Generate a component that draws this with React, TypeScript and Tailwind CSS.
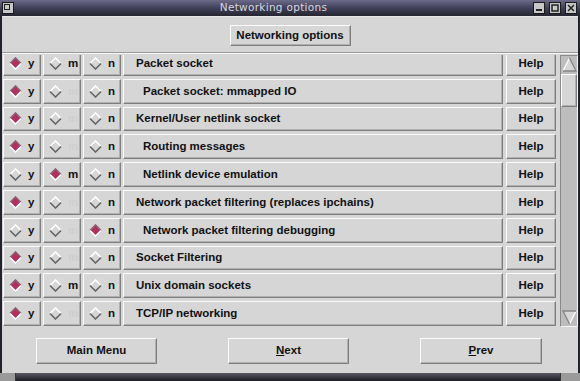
import React from 'react'

type Row = { label: string; indent?: boolean; sel: 'y' | 'm' | 'n'; mOk: boolean }

const rows: Row[] = [
  { label: 'Packet socket', sel: 'y', mOk: true },
  { label: 'Packet socket: mmapped IO', indent: true, sel: 'y', mOk: false },
  { label: 'Kernel/User netlink socket', sel: 'y', mOk: false },
  { label: 'Routing messages', indent: true, sel: 'y', mOk: false },
  { label: 'Netlink device emulation', indent: true, sel: 'm', mOk: true },
  { label: 'Network packet filtering (replaces ipchains)', sel: 'y', mOk: false },
  { label: 'Network packet filtering debugging', indent: true, sel: 'n', mOk: false },
  { label: 'Socket Filtering', sel: 'y', mOk: false },
  { label: 'Unix domain sockets', sel: 'y', mOk: true },
  { label: 'TCP/IP networking', sel: 'y', mOk: false },
]

const raised =
  'border border-t-[#fbfbfb] border-l-[#fbfbfb] border-b-[#7e7e7e] border-r-[#7e7e7e] shadow-[inset_-1px_-1px_0_#b0b0b0]'

function Diamond({ on }: { on: boolean }) {
  return (
    <svg width="13" height="13" viewBox="0 0 13 13" className="shrink-0">
      <polygon points="6.5,1 12,6.5 6.5,12 1,6.5" fill={on ? '#b03060' : '#d6d6d6'} />
      <polyline points="1,6.5 6.5,1 12,6.5" fill="none" stroke={on ? '#8a6070' : '#ffffff'} strokeWidth="1.6" />
      <polyline points="1,6.5 6.5,12 12,6.5" fill="none" stroke={on ? '#ffffff' : '#666666'} strokeWidth="1.6" />
    </svg>
  )
}

function Choice({ on, letter, faint }: { on: boolean; letter: string; faint?: boolean }) {
  return (
    <div className={`w-[38px] h-full flex items-center pl-[5px] ${raised}`}>
      <Diamond on={on} />
      <span className={`ml-[6px] ${faint ? 'text-[#cfcfcf]' : 'text-[#111]'}`}>{letter}</span>
    </div>
  )
}

function Arrow({ down }: { down?: boolean }) {
  return (
    <div className="h-[17px] flex items-center justify-center">
      <svg width="15" height="15" viewBox="0 0 15 15" className={down ? 'rotate-180' : ''}>
        <polygon points="7.5,1 14,14 1,14" fill="#d6d6d6" />
        <polyline points="1,14 7.5,1" fill="none" stroke="#ffffff" strokeWidth="1.3" />
        <polyline points="7.5,1 14,14 1,14" fill="none" stroke="#858585" strokeWidth="1.3" />
      </svg>
    </div>
  )
}

function WinBtn({ kind }: { kind: 'min' | 'max' | 'close' }) {
  return (
    <div className="w-[12px] h-[12px] bg-[#c8c8c8] border border-[#1a1a1a] flex items-center justify-center">
      <svg width="8" height="8" viewBox="0 0 8 8">
        {kind === 'min' && <rect x="1" y="5" width="6" height="2" fill="#222" />}
        {kind === 'max' && <rect x="1" y="1" width="6" height="6" fill="none" stroke="#222" strokeWidth="1.5" />}
        {kind === 'close' && <path d="M1 1 L7 7 M7 1 L1 7" stroke="#222" strokeWidth="1.5" />}
      </svg>
    </div>
  )
}

export default function App() {
  return (
    <div className="w-[580px] h-[381px] bg-[#22222a] flex flex-col font-['Liberation_Sans',Arial,sans-serif] font-bold text-[11.5px] text-[#111] overflow-hidden">
      <header className="h-[16px] shrink-0 flex items-center px-[2px] bg-linear-to-b from-[#6c6c8a] via-[#40405a] to-[#262630]">
        <div className="w-[12px] h-[12px] bg-[#c8c8c8] border border-[#1a1a1a] p-[1px]">
          <div className="w-[6px] h-[6px] border border-[#222]" />
        </div>
        <div className="flex-1 text-center font-['DejaVu_Sans',sans-serif] font-normal text-[10.5px] text-[#d8d8e0] tracking-[0.3px]">
          Networking options
        </div>
        <div className="flex gap-[4px] pr-[1px]">
          <WinBtn kind="min" />
          <WinBtn kind="max" />
          <WinBtn kind="close" />
        </div>
      </header>

      <main className="flex-1 mx-[2px] bg-[#d6d6d6] flex flex-col border-t border-[#e8e8e8]">
        <div className="flex justify-center mt-[8px]">
          <div className={`w-[121px] h-[21px] flex items-center justify-center ${raised}`}>Networking options</div>
        </div>
        <div className="mt-[6px] h-[2px] border-t border-[#9a9a9a] border-b border-b-[#f6f6f6]" />
        <div className="mt-[1px] h-[272px] flex">
          <div className="flex-1 overflow-hidden pl-[1px]">
            <div className="-mt-[4px] flex flex-col gap-[3px]">
              {rows.map((r) => (
                <div key={r.label} className="h-[24.8px] flex">
                  <Choice on={r.sel === 'y'} letter="y" />
                  <div className="w-[2px]" />
                  <Choice on={r.sel === 'm'} letter="m" faint={!r.mOk} />
                  <div className="w-[2px]" />
                  <Choice on={r.sel === 'n'} letter="n" />
                  <div className="w-[2px]" />
                  <div className={`w-[380px] h-full flex items-center ${r.indent ? 'pl-[19px]' : 'pl-[12px]'} ${raised}`}>
                    {r.label}
                  </div>
                  <div className="w-[3px]" />
                  <div className={`w-[50px] h-full flex items-center justify-center ${raised}`}>Help</div>
                </div>
              ))}
            </div>
          </div>
          <div className="w-[18px] ml-[3px] flex flex-col bg-[#bdbdbd] border border-t-[#8a8a8a] border-l-[#8a8a8a] border-b-[#f4f4f4] border-r-[#f4f4f4]">
            <Arrow />
            <div className={`h-[33px] mt-[1px] bg-[#d6d6d6] ${raised}`} />
            <div className="flex-1" />
            <Arrow down />
          </div>
        </div>
        <div className="mt-[11px] flex pl-[34px] gap-[71px]">
          <div className={`w-[121px] h-[26px] flex items-center justify-center ${raised}`}>Main Menu</div>
          <div className={`w-[121px] h-[26px] flex items-center justify-center ${raised}`}>
            <span><span className="underline">N</span>ext</span>
          </div>
          <div className={`w-[122px] h-[26px] flex items-center justify-center ${raised}`}>
            <span><span className="underline">P</span>rev</span>
          </div>
        </div>
      </main>

      <footer className="h-[8px] shrink-0 flex bg-linear-to-b from-[#5a5a66] to-[#1e1e24]">
        <div className="w-[16px] h-full bg-[#9a9a9a] border-r border-[#333]" />
        <div className="flex-1" />
        <div className="w-[20px] h-full bg-[#9a9a9a] border-l border-[#333]" />
      </footer>
    </div>
  )
}
